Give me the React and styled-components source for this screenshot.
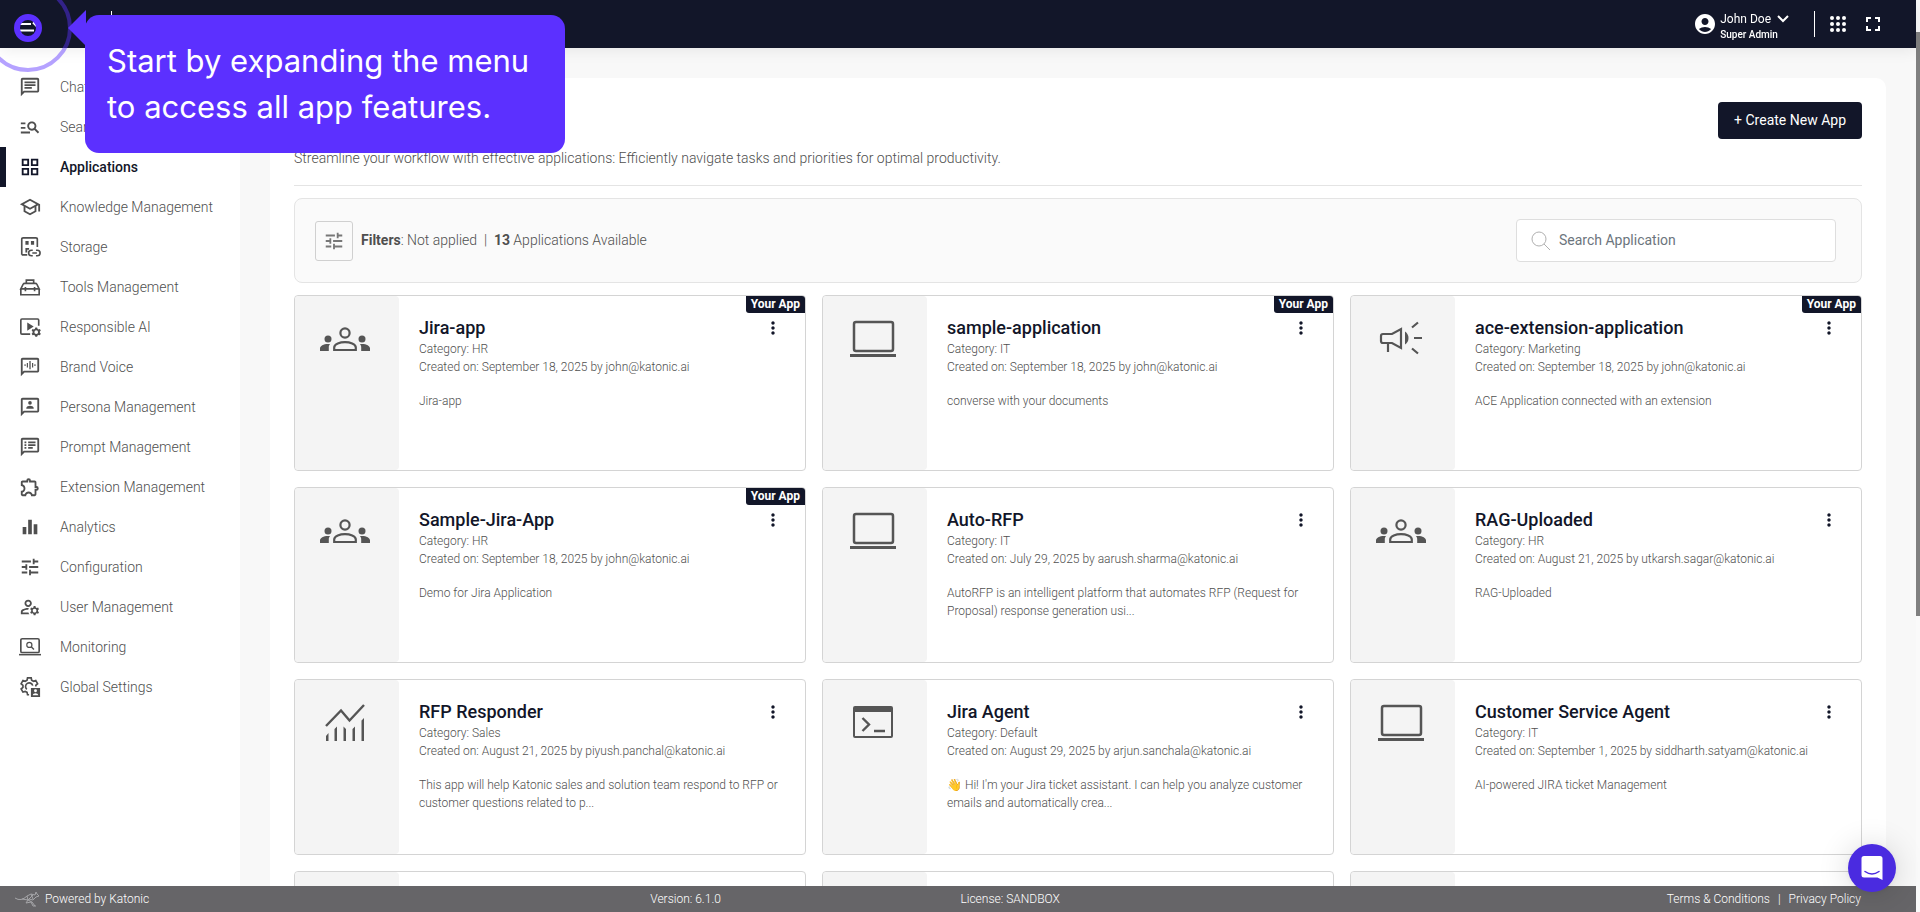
import React from 'react';
import styled, { createGlobalStyle, css } from 'styled-components';
import {
  MdManageSearch,
  MdOutlineChat,
  MdOutlineExtension,
  MdOutlineGridView,
  MdOutlineManageAccounts,
  MdOutlineSchool,
  MdOutlineSpeakerNotes,
  MdAccountCircle,
  MdEqualizer,
  MdFullscreen,
  MdMoreVert,
  MdTune,
} from 'react-icons/md';

const GlobalStyle = createGlobalStyle`
  * {
    box-sizing: border-box;
  }

  body {
    margin: 0;
    background: #fafafa;
    color: #4f4f4f;
    font-family: Roboto, 'Liberation Sans', sans-serif;
    font-size: 14px;
    font-weight: 300;
  }

  button,
  input {
    font-family: inherit;
  }
`;

const Page = styled.div`
  display: flex;
  flex-direction: column;
  height: 100vh;
  padding-right: 4px;
  overflow: hidden;
`;

const ScrollThumb = styled.div`
  position: fixed;
  top: 32px;
  right: 0;
  width: 4px;
  height: 64vh;
  background: #808080;
`;

/* header */

const Header = styled.header`
  display: flex;
  flex: none;
  align-items: center;
  justify-content: space-between;
  height: 48px;
  padding: 0 31px 0 16px;
  background: #121629;
  color: #fff;
  box-shadow: 0 2px 16px rgba(0, 0, 0, 0.08);
  z-index: 1;
`;

const HeaderGroup = styled.div`
  display: flex;
  align-items: center;
`;

const IconButton = styled.button`
  display: flex;
  padding: 0;
  border: 0;
  background: none;
  color: inherit;
  cursor: pointer;
`;

const Divider = styled.span`
  width: 1px;
  height: 26px;
  margin-left: ${({ $space }) => $space}px;
  background: #fff;
`;

const UserButton = styled(IconButton)`
  align-items: center;
  gap: 3px;
  text-align: left;
`;

const UserName = styled.span`
  display: flex;
  align-items: center;
  gap: 6px;
  font-size: 12px;
  font-weight: 400;
  line-height: 16px;
`;

const UserRole = styled.span`
  display: block;
  font-size: 10px;
  font-weight: 500;
  line-height: 16px;
`;

const UserText = styled.span`
  padding-top: 6px;
`;

const HeaderActions = styled.div`
  display: flex;
  align-items: center;
  gap: 11px;
  margin-left: 11px;
`;

/* sidebar */

const Body = styled.div`
  display: flex;
  flex: 1;
  min-height: 0;
`;

const Sidebar = styled.nav`
  flex: none;
  width: 240px;
  padding-top: 19px;
  background: #fff;
`;

const NavLink = styled.a`
  display: flex;
  align-items: center;
  gap: 19px;
  height: 40px;
  padding-left: 19px;
  color: #4f4f4f;
  text-decoration: none;
  white-space: nowrap;

  svg {
    flex: none;
  }

  ${({ $active }) =>
    $active &&
    css`
      padding-left: 13px;
      border-left: 6px solid #121629;
      color: #121629;
      font-weight: 500;
    `}
`;

/* content */

const Main = styled.main`
  flex: 1;
  min-width: 0;
  padding: 30px 30px 0;
  overflow: hidden;
  background: #f8f8f8;
`;

const Panel = styled.section`
  padding: 24px;
  border-radius: 10px;
  background: #fff;
`;

const PanelHead = styled.div`
  display: flex;
  align-items: flex-start;
  justify-content: space-between;
  height: 84px;
  border-bottom: 1px solid #e4e4e4;
`;

const Subtitle = styled.p`
  margin: 0;
  padding-top: 46px;
  line-height: 20px;
`;

const CreateButton = styled.button`
  height: 37px;
  padding: 0 16px 2px;
  border: 0;
  border-radius: 4px;
  background: #121629;
  color: #fff;
  font-size: 14px;
  cursor: pointer;
`;

const Toolbar = styled.div`
  display: flex;
  align-items: center;
  height: 85px;
  margin: 12px 0;
  padding: 0 25px 0 20px;
  border: 1px solid #e4e4e4;
  border-radius: 8px;
  background: #fafafa;
`;

const FilterButton = styled(IconButton)`
  align-items: center;
  justify-content: center;
  width: 38px;
  height: 40px;
  margin-right: 8px;
  border: 1px solid #d0d0d0;
  border-radius: 3px;
  color: #777;
`;

const FilterText = styled.p`
  margin: 0;
  padding-bottom: 2px;
  white-space: pre;

  strong {
    font-weight: 700;
  }
`;

const SearchBox = styled.label`
  display: flex;
  align-items: center;
  gap: 8px;
  width: 320px;
  height: 43px;
  margin-left: auto;
  padding: 0 14px;
  border: 1px solid #dedede;
  border-radius: 4px;
  background: #fff;
`;

const SearchInput = styled.input`
  flex: 1;
  min-width: 0;
  padding: 0 0 2px;
  border: 0;
  outline: 0;
  background: none;
  font-size: 14px;

  &::placeholder {
    color: #6c757d;
    opacity: 1;
  }
`;

const Grid = styled.div`
  display: grid;
  grid-template-columns: repeat(3, 1fr);
  gap: 16px;
`;

const Card = styled.article`
  position: relative;
  display: flex;
  height: 176px;
  border: 1px solid #d4d4d4;
  border-radius: 4px;
  background: #fff;
`;

const CardIcon = styled.div`
  flex: none;
  width: 104px;
  padding: 17px 0 0 25px;
  border-radius: 4px;
  background: #f4f4f4;
  color: #555;
`;

const CardBody = styled.div`
  flex: 1;
  min-width: 0;
  padding: 19px 22px 0 20px;
  font-size: 12px;
  line-height: 18px;
`;

const CardHead = styled.div`
  display: flex;
  align-items: center;
  justify-content: space-between;
  height: 25px;
  color: #121629;
`;

const CardTitle = styled.h2`
  margin: 0;
  font-size: 18px;
  font-weight: 500;
`;

const CardText = styled.p`
  margin: 0;
`;

const Description = styled(CardText)`
  padding-top: 16px;
`;

const Badge = styled.span`
  position: absolute;
  top: 0;
  right: 0;
  padding: 0 5px;
  border-radius: 0 3px 0 3px;
  background: #121629;
  color: #fff;
  font-size: 12px;
  font-weight: 700;
  line-height: 17px;
`;

/* footer */

const Footer = styled.footer`
  display: flex;
  flex: none;
  align-items: center;
  height: 26px;
  padding: 0 55px 0 14px;
  background: #666568;
  color: #fff;
  font-size: 12px;
`;

const FooterCell = styled.div`
  display: flex;
  align-items: center;
  flex: ${({ $grow }) => $grow} 0 0;
  gap: 5px;
`;

const FooterLinks = styled.div`
  display: flex;
  gap: 8px;

  a {
    color: inherit;
    text-decoration: none;
  }
`;

/* things over the page */

const ChatButton = styled.button`
  position: fixed;
  right: 24px;
  bottom: 20px;
  z-index: 2;
  display: flex;
  align-items: center;
  justify-content: center;
  width: 48px;
  height: 48px;
  border: 0;
  border-radius: 50%;
  background: #4a2be0;
  box-shadow: 0 2px 32px rgba(0, 0, 0, 0.16), 0 1px 6px rgba(0, 0, 0, 0.06);
  cursor: pointer;
`;

const Pulse = styled.span`
  position: fixed;
  top: ${({ $size }) => 28 - $size / 2}px;
  left: ${({ $size }) => 28 - $size / 2}px;
  z-index: 3;
  width: ${({ $size }) => $size}px;
  height: ${({ $size }) => $size}px;
  border: ${({ $stroke }) => $stroke}px solid #5c30ff;
  border-radius: 50%;
  opacity: ${({ $faint }) => ($faint ? 0.45 : 1)};
  pointer-events: none;
`;

const Callout = styled.div`
  position: fixed;
  top: 15px;
  left: 85px;
  z-index: 3;
  width: 480px;
  padding: 23px 22px;
  border-radius: 14px;
  background: #5c30ff;
  color: #fff;
  font-family: Inter, sans-serif;
  font-size: 31px;
  font-weight: 400;
  line-height: 46px;

  &::before {
    content: '';
    position: absolute;
    top: -5px;
    left: -17px;
    width: 18px;
    height: 36px;
    background: inherit;
    clip-path: polygon(0 50%, 100% 0, 100% 100%);
  }
`;

const BUBBLE =
  'M20 2H4c-1.100 0-2 .9-2 2v18l4-4h14c1.100 0 2-.9 2-2V4c0-1.100-.9-2-2-2zm0 14H5.200L4 17.200V4h16v12z';

const Icon = ({ size = 22, box = 24, children }) => (
  <svg width={size} height={size} viewBox={`0 0 ${box} ${box}`} fill="currentColor" aria-hidden="true">
    {children}
  </svg>
);

const StorageIcon = () => (
  <Icon>
    <path d="M20 12V3.500Q20 2 18.500 2h-14Q3 2 3 3.500v17" fill="none" stroke="currentColor" strokeWidth="1.800" />
    <path d="M7 5.500h3.500v4H7zM13 5.500h3.500v4H13zM7 13h4v2H9v3H7zM3 19.500h6v2H3z" />
    <path
      d="M15 15.500h-1.500a3 3 0 0 0 0 6H15M18.500 15.500H20a3 3 0 0 1 0 6h-1.500M14.500 18.500h5"
      fill="none"
      stroke="currentColor"
      strokeWidth="1.800"
    />
  </Icon>
);

const ToolsIcon = () => (
  <Icon>
    <path
      d="M2 14v6.500h20V14M2 14l2.500-5Q5 8 6.500 8h11q1.500 0 2 1L22 14zM8 8V4.500h8V8M7 12v4.500M17 12v4.500"
      fill="none"
      stroke="currentColor"
      strokeWidth="1.800"
    />
  </Icon>
);

const GEAR =
  'M17.800 12.500h2l.4 1.400 1.200.7 1.400-.4 1 1.700-1 1v1.400l1 1-1 1.700-1.400-.4-1.200.7-.4 1.400h-2l-.4-1.400-1.200-.7-1.400.4-1-1.700 1-1v-1.400l-1-1 1-1.700 1.400.4 1.200-.7zm1 3.100a2 2 0 1 0 0 4 2 2 0 0 0 0-4z';

const ResponsibleIcon = () => (
  <Icon>
    <path
      d="M21.500 10.500V4.500q0-1.200-1.200-1.200H3.200Q2 3.300 2 4.500v14q0 1.200 1.200 1.200h9"
      fill="none"
      stroke="currentColor"
      strokeWidth="1.800"
    />
    <path d="M9 7l7 4.500L9 16z" />
    <path d={GEAR} fillRule="evenodd" />
  </Icon>
);

const VoiceIcon = () => (
  <Icon>
    <path d={BUBBLE} />
    <path d="M6 9h1.200v2H6zM8.500 7.500h1.300v5H8.500zM11.300 5.500h1.400v9h-1.400zM14.200 7.500h1.300v5h-1.300zM16.800 9H18v2h-1.200z" />
  </Icon>
);

const PersonaIcon = () => (
  <Icon>
    <path d={BUBBLE} />
    <circle cx="12" cy="7.500" r="2" />
    <path d="M8 14v-1c0-1.500 2.500-2.300 4-2.300s4 .8 4 2.300v1z" />
  </Icon>
);

const MonitoringIcon = () => (
  <Icon>
    <rect x="2" y="3" width="20" height="15" rx="1.500" fill="none" stroke="currentColor" strokeWidth="1.800" />
    <path d="M0 19.500h24v1.700H0z" />
    <circle cx="11.300" cy="9.700" r="2.800" fill="none" stroke="currentColor" strokeWidth="1.300" />
    <path d="M13.300 11.700l3 3" stroke="currentColor" strokeWidth="1.500" />
  </Icon>
);

const SettingsIcon = () => (
  <Icon>
    <path
      d="M11 20.500H9.300l-.5-2.600-2-1.100-2.500.8-2-3.400 2-1.800v-2.300l-2-1.700 2-3.500 2.500.9 2-1.200.5-2.600h4l.5 2.600 2 1.200 2.500-.9 2 3.500-2 1.700.1 1.400M8.500 14.500a4 4 0 1 1 6.500-4"
      fill="none"
      stroke="currentColor"
      strokeWidth="1.800"
    />
    <path d="M13 13h10v10H13zm5 1.500a1.600 1.600 0 1 0 0 3.200 1.600 1.600 0 0 0 0-3.200zm-3 6.500h6c0-1.500-1.500-2.300-3-2.300s-3 .8-3 2.300z" fillRule="evenodd" />
  </Icon>
);

const LaptopIcon = () => (
  <Icon size={50} box={50}>
    <rect x="6" y="9" width="39" height="29" rx="2" fill="none" stroke="currentColor" strokeWidth="2.500" />
    <path d="M2 41h46v3H2z" />
  </Icon>
);

const GroupsIcon = () => (
  <Icon size={50} box={50}>
    <circle cx="25" cy="20" r="4.600" fill="none" stroke="currentColor" strokeWidth="2.200" />
    <path
      d="M14.200 37v-2.500c0-3.500 6-5.300 10.800-5.300s10.800 1.800 10.800 5.300V37z"
      fill="none"
      stroke="currentColor"
      strokeWidth="2.200"
    />
    <circle cx="8" cy="26" r="3.500" />
    <circle cx="42" cy="26" r="3.500" />
    <path d="M0 38v-2.500C0 33 3.500 31 8 31h2c-1 1.200-1.200 2.300-1.200 3.500V38zM50 38v-2.500C50 33 46.500 31 42 31h-2c1 1.200 1.200 2.300 1.200 3.500V38z" />
  </Icon>
);

const CampaignIcon = () => (
  <Icon size={50} box={50}>
    <path
      d="M25 16v19l-9-5H7q-2 0-2-2v-5q0-2 2-2h9zM12 30v9M38 25h8M36 14.500l6-5M36 35.500l6 5"
      fill="none"
      stroke="currentColor"
      strokeWidth="2.200"
    />
    <path d="M29 18.500q3.500 2.500 3.500 6.500T29 31.500z" />
  </Icon>
);

const TerminalIcon = () => (
  <Icon size={50} box={50}>
    <path d="M7 9h36q2 0 2 2v28q0 2-2 2H7q-2 0-2-2V11q0-2 2-2zm0 6v24h36V15z" fillRule="evenodd" />
    <path d="M14.500 21l6.500 6.500-6.500 6.500M26 34h11" fill="none" stroke="currentColor" strokeWidth="2.400" />
  </Icon>
);

const ChartIcon = () => (
  <Icon size={50} box={50}>
    <path d="M6 29l15-15.500 8.500 10L44 8" fill="none" stroke="currentColor" strokeWidth="2.400" />
    <path d="M6 39l2.500-3v8H6zM14.500 32l2.500-2.500V44h-2.500zM23.500 29.500L26 32v12h-2.500zM32.500 32l2.500-2.500V44h-2.500zM41.500 23.500L44 21v23h-2.500z" />
  </Icon>
);

const MenuIcon = () => (
  <svg width="24" height="20" viewBox="0 0 24 20" fill="none" stroke="#fff" strokeWidth="2" aria-hidden="true">
    <path d="M3 4h12M3 10h12M3 16.500h15M17 8.500l5 5" />
  </svg>
);

const AppsIcon = () => (
  <Icon size={24}>
    {[6, 12, 18].map(y => [6, 12, 18].map(x => <circle key={`${x}-${y}`} cx={x} cy={y} r="2" />))}
  </Icon>
);

const SearchIcon = () => (
  <svg width="20" height="20" viewBox="0 0 20 20" fill="none" stroke="#b0b0b0" aria-hidden="true">
    <circle cx="8" cy="8" r="7" />
    <path d="M13 13l6 6" />
  </svg>
);

const ChevronIcon = () => (
  <svg width="12" height="8" viewBox="0 0 12 8" fill="none" stroke="#fff" strokeWidth="2" aria-hidden="true">
    <path d="M1 1l5 5 5-5" />
  </svg>
);

const KangarooIcon = () => (
  <svg width="26" height="16" viewBox="0 0 26 16" fill="none" stroke="#a5a5a8" strokeWidth="1" aria-hidden="true">
    <path d="M1 7q6 4 12-2l4-2 4 1 1-3 1 2 2 2-3 1-3 3-4-1M13 5l1 4 5-5M8 8l6 1 4 2 3 4M14 9l-2 3 5-1 2 4h3M17 3l2 5" />
  </svg>
);

const MessageIcon = () => (
  <svg width="22" height="26" viewBox="0 0 22 26" aria-hidden="true">
    <path d="M3 1h16q2.500 0 2.500 2.500V25l-5-2.500H3Q.5 22.500.5 20V3.500Q.5 1 3 1z" fill="#fff" />
    <path d="M4 16.500q7 5 14 0" fill="none" stroke="#4a2be0" strokeWidth="1.500" strokeLinecap="round" />
  </svg>
);

const navItems = [
  { label: 'Chat', icon: <MdOutlineChat size={22} /> },
  { label: 'Search', icon: <MdManageSearch size={22} /> },
  { label: 'Applications', icon: <MdOutlineGridView size={22} />, active: true },
  { label: 'Knowledge Management', icon: <MdOutlineSchool size={22} /> },
  { label: 'Storage', icon: <StorageIcon /> },
  { label: 'Tools Management', icon: <ToolsIcon /> },
  { label: 'Responsible AI', icon: <ResponsibleIcon /> },
  { label: 'Brand Voice', icon: <VoiceIcon /> },
  { label: 'Persona Management', icon: <PersonaIcon /> },
  { label: 'Prompt Management', icon: <MdOutlineSpeakerNotes size={22} /> },
  { label: 'Extension Management', icon: <MdOutlineExtension size={22} /> },
  { label: 'Analytics', icon: <MdEqualizer size={22} /> },
  { label: 'Configuration', icon: <MdTune size={22} /> },
  { label: 'User Management', icon: <MdOutlineManageAccounts size={22} /> },
  { label: 'Monitoring', icon: <MonitoringIcon /> },
  { label: 'Global Settings', icon: <SettingsIcon /> },
];

const icons = {
  HR: <GroupsIcon />,
  IT: <LaptopIcon />,
  Marketing: <CampaignIcon />,
  Sales: <ChartIcon />,
  Default: <TerminalIcon />,
};

const apps = [
  {
    name: 'Jira-app',
    category: 'HR',
    created: 'September 18, 2025 by john@katonic.ai',
    text: 'Jira-app',
    own: true,
  },
  {
    name: 'sample-application',
    category: 'IT',
    created: 'September 18, 2025 by john@katonic.ai',
    text: 'converse with your documents',
    own: true,
  },
  {
    name: 'ace-extension-application',
    category: 'Marketing',
    created: 'September 18, 2025 by john@katonic.ai',
    text: 'ACE Application connected with an extension',
    own: true,
  },
  {
    name: 'Sample-Jira-App',
    category: 'HR',
    created: 'September 18, 2025 by john@katonic.ai',
    text: 'Demo for Jira Application',
    own: true,
  },
  {
    name: 'Auto-RFP',
    category: 'IT',
    created: 'July 29, 2025 by aarush.sharma@katonic.ai',
    text: 'AutoRFP is an intelligent platform that automates RFP (Request for Proposal) response generation usi...',
  },
  {
    name: 'RAG-Uploaded',
    category: 'HR',
    created: 'August 21, 2025 by utkarsh.sagar@katonic.ai',
    text: 'RAG-Uploaded',
  },
  {
    name: 'RFP Responder',
    category: 'Sales',
    created: 'August 21, 2025 by piyush.panchal@katonic.ai',
    text: 'This app will help Katonic sales and solution team respond to RFP or customer questions related to p...',
  },
  {
    name: 'Jira Agent',
    category: 'Default',
    created: 'August 29, 2025 by arjun.sanchala@katonic.ai',
    text: "👋 Hi! I'm your Jira ticket assistant. I can help you analyze customer emails and automatically crea...",
  },
  {
    name: 'Customer Service Agent',
    category: 'IT',
    created: 'September 1, 2025 by siddharth.satyam@katonic.ai',
    text: 'AI-powered JIRA ticket Management',
  },
];

// next row, still loading
const pending = [1, 2, 3];

const AppCard = ({ app }) => (
  <Card>
    <CardIcon>{icons[app.category]}</CardIcon>
    <CardBody>
      <CardHead>
        <CardTitle>{app.name}</CardTitle>
        <IconButton type="button" aria-label={`Options for ${app.name}`}>
          <MdMoreVert size={20} />
        </IconButton>
      </CardHead>
      <CardText>Category: {app.category}</CardText>
      <CardText>Created on: {app.created}</CardText>
      <Description>{app.text}</Description>
    </CardBody>
    {app.own && <Badge>Your App</Badge>}
  </Card>
);

const App = () => {
  return (
    <>
      <GlobalStyle />
      <Page>
        <Header>
          <HeaderGroup>
            <IconButton type="button" aria-label="Expand menu">
              <MenuIcon />
            </IconButton>
            <Divider $space={71} />
          </HeaderGroup>
          <HeaderGroup>
            <UserButton type="button">
              <MdAccountCircle size={24} />
              <UserText>
                <UserName>
                  John Doe <ChevronIcon />
                </UserName>
                <UserRole>Super Admin</UserRole>
              </UserText>
            </UserButton>
            <Divider $space={25} />
            <HeaderActions>
              <IconButton type="button" aria-label="Apps">
                <AppsIcon />
              </IconButton>
              <IconButton type="button" aria-label="Full screen">
                <MdFullscreen size={24} />
              </IconButton>
            </HeaderActions>
          </HeaderGroup>
        </Header>
        <Body>
          <Sidebar>
            {navItems.map(item => (
              <NavLink key={item.label} href="#" $active={item.active}>
                {item.icon}
                {item.label}
              </NavLink>
            ))}
          </Sidebar>
          <Main>
            <Panel>
              <PanelHead>
                <Subtitle>
                  Streamline your workflow with effective applications: Efficiently navigate tasks and priorities for
                  optimal productivity.
                </Subtitle>
                <CreateButton type="button">+ Create New App</CreateButton>
              </PanelHead>
              <Toolbar>
                <FilterButton type="button" aria-label="Filters">
                  <MdTune size={22} />
                </FilterButton>
                <FilterText>
                  <strong>Filters</strong>: Not applied{'  |  '}
                  <strong>13</strong> Applications Available
                </FilterText>
                <SearchBox>
                  <SearchIcon />
                  <SearchInput type="text" placeholder="Search Application" aria-label="Search Application" />
                </SearchBox>
              </Toolbar>
              <Grid>
                {apps.map(app => (
                  <AppCard key={app.name} app={app} />
                ))}
                {pending.map(id => (
                  <Card key={id}>
                    <CardIcon />
                  </Card>
                ))}
              </Grid>
            </Panel>
          </Main>
        </Body>
        <Footer>
          <FooterCell $grow={636}>
            <KangarooIcon />
            Powered by Katonic
          </FooterCell>
          <FooterCell $grow={310}>Version: 6.1.0</FooterCell>
          <FooterCell $grow={706}>License: SANDBOX</FooterCell>
          <FooterLinks>
            <a href="#">Terms &amp; Conditions</a>
            <span>|</span>
            <a href="#">Privacy Policy</a>
          </FooterLinks>
        </Footer>
      </Page>
      <ScrollThumb />
      <ChatButton type="button" aria-label="Open chat">
        <MessageIcon />
      </ChatButton>
      <Pulse $size={88} $stroke={4} $faint />
      <Pulse $size={28} $stroke={6} />
      <Callout role="tooltip">Start by expanding the menu to access all app features.</Callout>
    </>
  );
};

export default App;
